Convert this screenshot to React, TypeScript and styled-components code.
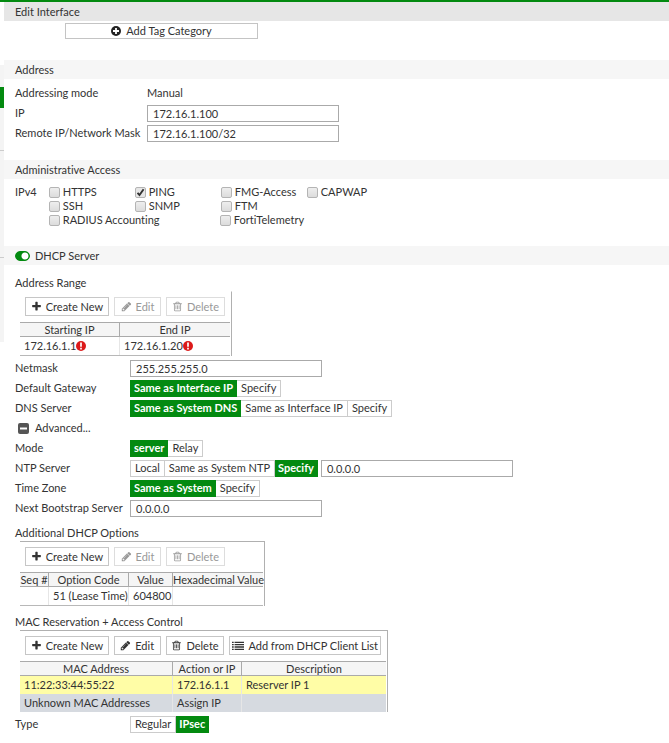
import React from "react";
import styled, { createGlobalStyle, css } from "styled-components";

const GlobalStyle = createGlobalStyle`
  *, *::before, *::after { box-sizing: border-box; }
  body { margin: 0; background: #fff; }
  body, button, input, table {
    font-family: Lato, "Open Sans", sans-serif;
    font-size: 11px;
    line-height: 14px;
    color: #333;
    font-variant-ligatures: none;
  }
`;

const Page = styled.div`
  border-top: 2px solid #038a10;
  display: flex;
  align-items: stretch;
`;
const Rail = styled.div`
  width: 4px;
  flex: none;
  display: flex;
  flex-direction: column;
  padding-top: 63px;
`;
const RailBlock = styled.div<{ $h: number; $bg: string }>`
  height: ${(p) => p.$h}px;
  background: ${(p) => p.$bg};
`;
const Main = styled.main`
  flex: 1;
  min-width: 0;
`;
const TitleBar = styled.h1`
  margin: 0;
  height: 19px;
  padding: 0 11px;
  background: #e6e6e6;
  font-size: 11px;
  font-weight: 400;
  line-height: 20px;
`;
const SectionBar = styled.h2`
  margin: 0;
  height: 19px;
  padding: 0 11px;
  display: flex;
  align-items: center;
  gap: 5px;
  background: #f6f6f6;
  font-size: 11px;
  font-weight: 400;
  line-height: 20px;
`;
const TagArea = styled.div`
  padding: 2px 0 21px 61px;
`;
const TagButton = styled.button`
  width: 193px;
  height: 16px;
  padding: 0;
  display: flex;
  align-items: center;
  justify-content: center;
  gap: 5px;
  background: #fff;
  border: 1px solid #c4c4c4;
`;
const Body = styled.div<{ $top: number; $bottom: number }>`
  padding: ${(p) => p.$top}px 11px ${(p) => p.$bottom}px;
`;
const Row = styled.div<{ $label: number }>`
  display: grid;
  grid-template-columns: ${(p) => p.$label}px minmax(0, 1fr);
  align-items: center;
  height: 20px;
`;
const Inline = styled.div`
  display: flex;
  align-items: center;
  gap: 3px;
`;
const TextInput = styled.input`
  width: 192px;
  height: 17px;
  padding: 1px 5px 0;
  border: 1px solid #aaa;
  background: #fff;
  border-radius: 0;
`;
const Access = styled.div`
  display: flex;
  gap: 12px;
  padding: 6px 11px 19px;
`;
const CheckGrid = styled.div`
  display: flex;
  flex-direction: column;
`;
const CheckLine = styled.div<{ $col: number }>`
  display: grid;
  grid-auto-flow: column;
  grid-auto-columns: ${(p) => p.$col}px;
  height: 14px;
`;
const CheckLabel = styled.label`
  display: flex;
  align-items: center;
  gap: 3px;
  white-space: nowrap;
`;
const CheckBox = styled.input`
  appearance: none;
  width: 11px;
  height: 11px;
  margin: 0;
  border: 1px solid #b4b4b4;
  border-radius: 2px;
  background: linear-gradient(#eee, #dcdcdc);
  &:checked {
    background: url("data:image/svg+xml,%3Csvg xmlns='http://www.w3.org/2000/svg' viewBox='0 0 9 9'%3E%3Cpath d='M1.5 4.8 3.5 7 7.6 1.2' fill='none' stroke='%23333' stroke-width='1.9'/%3E%3C/svg%3E") center / 9px 9px no-repeat, #e6e6e6;
  }
`;
const Switch = styled.input`
  appearance: none;
  width: 15px;
  height: 10px;
  margin: 0;
  border: 1px solid #038a10;
  border-radius: 5px;
  background: radial-gradient(circle at 9px 4px, #fff 3px, #038a10 4px);
`;
const SubTitle = styled.h3`
  margin: 0;
  font-size: 11px;
  font-weight: 400;
  line-height: 16px;
`;
const Group = styled.div`
  display: flex;
`;
const Choice = styled.button<{ $on?: boolean }>`
  height: 17px;
  padding: 0 4px;
  white-space: nowrap;
  background: #fff;
  border: 1px solid #ccc;
  & + & { border-left: 0; }
  ${(p) =>
    p.$on &&
    css`
      padding: 0 3px;
      background: #038a10;
      border-color: #038a10;
      color: #fff;
      font-weight: 700;
    `}
`;
const Panel = styled.div<{ $w: number; $top?: boolean; $bottom: number }>`
  width: ${(p) => p.$w}px;
  margin: 0 0 ${(p) => p.$bottom}px 5px;
  border: 0 solid #b0b0b0;
  border-top: 1px solid ${(p) => (p.$top ? "#b0b0b0" : "transparent")};
  border-right-width: 1px;
  padding-right: 1px;
`;
const Toolbar = styled.div`
  display: flex;
  gap: 5px;
  padding: 5px 5px 6px;
`;
const ToolButton = styled.button<{ $w: number }>`
  width: ${(p) => p.$w}px;
  height: 19px;
  padding: 0;
  display: flex;
  align-items: center;
  justify-content: center;
  gap: 4px;
  white-space: nowrap;
  background: #fff;
  border: 1px solid #c6c6c6;
  &:disabled { color: #999; border-color: #ddd; }
`;
const Table = styled.table<{ $line?: boolean }>`
  width: 100%;
  table-layout: fixed;
  border-collapse: separate;
  border-spacing: 0;
  border-bottom: ${(p) => (p.$line ? 1 : 0)}px solid #b8b8b8;
`;
const Th = styled.th<{ $w?: number }>`
  width: ${(p) => (p.$w ? `${p.$w}px` : "auto")};
  height: 15px;
  padding: 0;
  font-weight: 400;
  line-height: 13px;
  white-space: nowrap;
  background: #f5f5f5;
  border: 0 solid #aaa;
  border-width: 1px 1px 1px 0;
  &:last-child { border-right: 0; }
`;
const Tr = styled.tr<{ $bg?: string }>`
  background: ${(p) => p.$bg || "#fff"};
`;
const Td = styled.td`
  height: 18px;
  padding: 0 4px;
  white-space: nowrap;
  border-right: 1px solid #e6e6e6;
  &:last-child { border-right: 0; }
`;
const Cell = styled.span`
  display: flex;
  align-items: center;
`;
const Advanced = styled.button`
  height: 20px;
  padding: 0 3px;
  display: flex;
  align-items: center;
  gap: 6px;
  border: 0;
  background: none;
`;
const Svg = styled.svg`
  flex: none;
  display: block;
`;

const PATHS = {
  plus: "M1600 736v192q0 40-28 68t-68 28h-416v416q0 40-28 68t-68 28h-192q-40 0-68-28t-28-68v-416h-416q-40 0-68-28t-28-68v-192q0-40 28-68t68-28h416v-416q0-40 28-68t68-28h192q40 0 68 28t28 68v416h416q40 0 68 28t28 68z",
  pencil: "M491 1536l91-91-235-235-91 91v107h128v128h107zm523-928q0-22-22-22-10 0-17 7l-542 542q-7 7-7 17 0 22 22 22 10 0 17-7l542-542q7-7 7-17zm-54-192l416 416-832 832h-416v-416zm683 96q0 53-37 90l-166 166-416-416 166-165q36-38 90-38 53 0 91 38l235 234q37 39 37 91z",
  trash: "M704 736v576q0 14-9 23t-23 9h-64q-14 0-23-9t-9-23v-576q0-14 9-23t23-9h64q14 0 23 9t9 23zm256 0v576q0 14-9 23t-23 9h-64q-14 0-23-9t-9-23v-576q0-14 9-23t23-9h64q14 0 23 9t9 23zm256 0v576q0 14-9 23t-23 9h-64q-14 0-23-9t-9-23v-576q0-14 9-23t23-9h64q14 0 23 9t9 23zm128 724v-948h-896v948q0 22 7 40.5t14.5 27 10.5 8.5h832q3 0 10.5-8.5t14.5-27 7-40.5zm-672-1076h448l-48-117q-7-9-17-11h-317q-10 2-17 11zm928 32v64q0 14-9 23t-23 9h-96v948q0 83-47 143.5t-113 60.5h-832q-66 0-113-58.5t-47-141.5v-952h-96q-14 0-23-9t-9-23v-64q0-14 9-23t23-9h309l70-167q15-37 54-63t79-26h320q40 0 79 26t54 63l70 167h309q14 0 23 9t9 23z",
  list: "M0 256h256v200H0zM384 256h1408v200H384zM0 600h256v200H0zM384 600h1408v200H384zM0 944h256v200H0zM384 944h1408v200H384zM0 1288h256v200H0zM384 1288h1408v200H384z",
};

const Icon = ({ name, size = 11 }: { name: keyof typeof PATHS; size?: number }) => (
  <Svg width={size} height={size} viewBox="0 0 1792 1792" fill="currentColor" aria-hidden>
    <path d={PATHS[name]} />
  </Svg>
);

const PlusCircle = () => (
  <Svg width="10" height="10" viewBox="0 0 10 10" aria-hidden>
    <circle cx="5" cy="5" r="5" fill="#222" />
    <path d="M5 2v6M2 5h6" stroke="#fff" strokeWidth="1.8" />
  </Svg>
);
const Alert = () => (
  <Svg width="10" height="10" viewBox="0 0 10 10" role="img" aria-label="Error">
    <circle cx="5" cy="5" r="5" fill="#dc1a1a" />
    <path d="M5 1.5v4.2M5 6.8v1.7" stroke="#fff" strokeWidth="1.7" />
  </Svg>
);
const MinusSquare = () => (
  <Svg width="11" height="11" viewBox="0 0 11 11" aria-hidden>
    <rect width="11" height="11" rx="2" fill="#555" />
    <path d="M2 5.5h7" stroke="#fff" strokeWidth="2" />
  </Svg>
);

const Choices = ({ label, items, on }: { label: string; items: string[]; on: string }) => (
  <Group role="group" aria-label={label}>
    {items.map((t) => (
      <Choice key={t} type="button" $on={t === on} aria-pressed={t === on}>
        {t}
      </Choice>
    ))}
  </Group>
);

const Field = ({ id, label, value, width }: { id: string; label: string; value: string; width: number }) => (
  <Row $label={width}>
    <label htmlFor={id}>{label}</label>
    <TextInput id={id} defaultValue={value} />
  </Row>
);

const Tools = ({ disabled, extra }: { disabled?: boolean; extra?: boolean }) => (
  <Toolbar>
    <ToolButton type="button" $w={84}>
      <Icon name="plus" />
      Create New
    </ToolButton>
    <ToolButton type="button" $w={47} disabled={disabled}>
      <Icon name="pencil" />
      Edit
    </ToolButton>
    <ToolButton type="button" $w={59} disabled={disabled}>
      <Icon name="trash" />
      Delete
    </ToolButton>
    {extra && (
      <ToolButton type="button" $w={152}>
        <Icon name="list" size={12} />
        Add from DHCP Client List
      </ToolButton>
    )}
  </Toolbar>
);

const Check = ({ label, checked }: { label: string; checked?: boolean }) => (
  <CheckLabel>
    <CheckBox type="checkbox" defaultChecked={checked} />
    {label}
  </CheckLabel>
);

export default function App() {
  return (
    <>
      <GlobalStyle />
      <Page>
        <Rail>
          <RailBlock $h={22} $bg="#f4f4f4" />
          <RailBlock $h={21} $bg="#038a10" />
          <RailBlock $h={42} $bg="#f4f4f4" />
          <RailBlock $h={1} $bg="#ccc" />
          <RailBlock $h={106} $bg="#f4f4f4" />
          <RailBlock $h={1} $bg="#ccc" />
          <RailBlock $h={84} $bg="#f4f4f4" />
        </Rail>
        <Main>
          <TitleBar>Edit Interface</TitleBar>
          <TagArea>
            <TagButton type="button">
              <PlusCircle />
              Add Tag Category
            </TagButton>
          </TagArea>

          <SectionBar>Address</SectionBar>
          <Body $top={4} $bottom={17}>
            <Row $label={132}>
              <span>Addressing mode</span>
              <span>Manual</span>
            </Row>
            <Field id="ip" label="IP" value="172.16.1.100" width={132} />
            <Field id="mask" label="Remote IP/Network Mask" value="172.16.1.100/32" width={132} />
          </Body>

          <SectionBar>Administrative Access</SectionBar>
          <Access>
            <span>IPv4</span>
            <CheckGrid>
              <CheckLine $col={86}>
                <Check label="HTTPS" />
                <Check label="PING" checked />
                <Check label="FMG-Access" />
                <Check label="CAPWAP" />
              </CheckLine>
              <CheckLine $col={86}>
                <Check label="SSH" />
                <Check label="SNMP" />
                <Check label="FTM" />
              </CheckLine>
              <CheckLine $col={171}>
                <Check label="RADIUS Accounting" />
                <Check label="FortiTelemetry" />
              </CheckLine>
            </CheckGrid>
          </Access>

          <SectionBar>
            <Switch type="checkbox" role="switch" id="dhcp" defaultChecked />
            <label htmlFor="dhcp">DHCP Server</label>
          </SectionBar>
          <Body $top={10} $bottom={0}>
            <SubTitle>Address Range</SubTitle>
            <Panel $w={212} $bottom={2}>
              <Tools disabled />
              <Table $line>
                <thead>
                  <tr>
                    <Th $w={100}>Starting IP</Th>
                    <Th>End IP</Th>
                  </tr>
                </thead>
                <tbody>
                  <Tr>
                    <Td><Cell>172.16.1.1<Alert /></Cell></Td>
                    <Td><Cell>172.16.1.20<Alert /></Cell></Td>
                  </Tr>
                </tbody>
              </Table>
            </Panel>

            <Field id="netmask" label="Netmask" value="255.255.255.0" width={115} />
            <Row $label={115}>
              <span>Default Gateway</span>
              <Choices label="Default Gateway" items={["Same as Interface IP", "Specify"]} on="Same as Interface IP" />
            </Row>
            <Row $label={115}>
              <span>DNS Server</span>
              <Choices label="DNS Server" items={["Same as System DNS", "Same as Interface IP", "Specify"]} on="Same as System DNS" />
            </Row>
            <Advanced type="button" aria-expanded="true">
              <MinusSquare />
              Advanced...
            </Advanced>
            <Row $label={115}>
              <span>Mode</span>
              <Choices label="Mode" items={["server", "Relay"]} on="server" />
            </Row>
            <Row $label={115}>
              <label htmlFor="ntp">NTP Server</label>
              <Inline>
                <Choices label="NTP Server" items={["Local", "Same as System NTP", "Specify"]} on="Specify" />
                <TextInput id="ntp" defaultValue="0.0.0.0" />
              </Inline>
            </Row>
            <Row $label={115}>
              <span>Time Zone</span>
              <Choices label="Time Zone" items={["Same as System", "Specify"]} on="Same as System" />
            </Row>
            <Field id="bootstrap" label="Next Bootstrap Server" value="0.0.0.0" width={115} />
          </Body>

          <Body $top={7} $bottom={8}>
            <SubTitle>Additional DHCP Options</SubTitle>
            <Panel $w={245} $top $bottom={0}>
              <Tools disabled />
              <Table $line>
                <thead>
                  <tr>
                    <Th $w={29}>Seq #</Th>
                    <Th $w={80}>Option Code</Th>
                    <Th $w={44}>Value</Th>
                    <Th>Hexadecimal Value</Th>
                  </tr>
                </thead>
                <tbody>
                  <Tr>
                    <Td />
                    <Td>51 (Lease Time)</Td>
                    <Td>604800</Td>
                    <Td />
                  </Tr>
                </tbody>
              </Table>
            </Panel>
          </Body>

          <Body $top={0} $bottom={8}>
            <SubTitle>MAC Reservation + Access Control</SubTitle>
            <Panel $w={368} $top $bottom={2}>
              <Tools extra />
              <Table>
                <thead>
                  <tr>
                    <Th $w={153}>MAC Address</Th>
                    <Th $w={69}>Action or IP</Th>
                    <Th>Description</Th>
                  </tr>
                </thead>
                <tbody>
                  <Tr $bg="#fffda6">
                    <Td>11:22:33:44:55:22</Td>
                    <Td>172.16.1.1</Td>
                    <Td>Reserver IP 1</Td>
                  </Tr>
                  <Tr $bg="#d6dae0">
                    <Td>Unknown MAC Addresses</Td>
                    <Td>Assign IP</Td>
                    <Td />
                  </Tr>
                </tbody>
              </Table>
            </Panel>
            <Row $label={115}>
              <span>Type</span>
              <Choices label="Type" items={["Regular", "IPsec"]} on="IPsec" />
            </Row>
          </Body>
        </Main>
      </Page>
    </>
  );
}
